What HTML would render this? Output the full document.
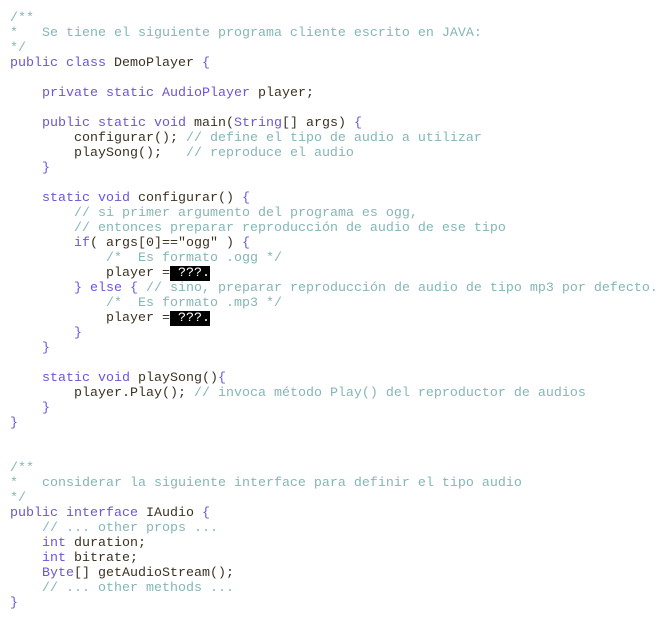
<!DOCTYPE html>
<html><head><meta charset="utf-8"><style>
html,body{margin:0;background:#fff;width:672px;height:619px;overflow:hidden}
pre{margin:0;position:absolute;left:10px;top:11px;font-family:"Liberation Mono",monospace;font-size:13.33px;line-height:15px;color:#3b3222}
.k{color:#6b55dc}.c{color:#85b6b6}
.b{background:#000;color:#fff}
</style></head><body><pre><span class="c">/**
*   Se tiene el siguiente programa cliente escrito en JAVA:
*/</span>
<span class="k">public class</span> DemoPlayer <span class="k">{</span>

    <span class="k">private static AudioPlayer</span> player;

    <span class="k">public static void</span> main(<span class="k">String</span>[] args) <span class="k">{</span>
        configurar(); <span class="c">// define el tipo de audio a utilizar</span>
        playSong();   <span class="c">// reproduce el audio</span>
    <span class="k">}</span>

    <span class="k">static void</span> configurar() <span class="k">{</span>
        <span class="c">// si primer argumento del programa es ogg,</span>
        <span class="c">// entonces preparar reproducción de audio de ese tipo</span>
        <span class="k">if</span>( args[0]=="ogg" ) <span class="k">{</span>
            <span class="c">/*  Es formato .ogg */</span>
            player =<span class="b"> ???.</span>
        <span class="k">} else {</span> <span class="c">// sino, preparar reproducción de audio de tipo mp3 por defecto.</span>
            <span class="c">/*  Es formato .mp3 */</span>
            player =<span class="b"> ???.</span>
        <span class="k">}</span>
    <span class="k">}</span>

    <span class="k">static void</span> playSong()<span class="k">{</span>
        player.Play(); <span class="c">// invoca método Play() del reproductor de audios</span>
    <span class="k">}</span>
<span class="k">}</span>


<span class="c">/**
*   considerar la siguiente interface para definir el tipo audio
*/</span>
<span class="k">public interface</span> IAudio <span class="k">{</span>
    <span class="c">// ... other props ...</span>
    <span class="k">int</span> duration;
    <span class="k">int</span> bitrate;
    <span class="k">Byte</span>[] getAudioStream();
    <span class="c">// ... other methods ...</span>
<span class="k">}</span></pre></body></html>
